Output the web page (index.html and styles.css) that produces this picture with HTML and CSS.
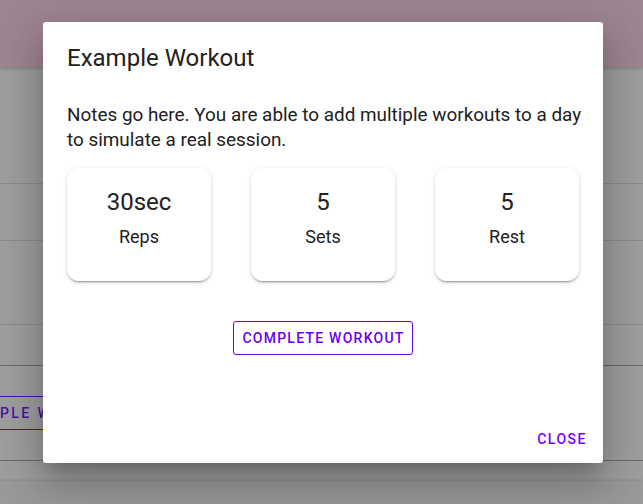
FILE: index.html
```html
<!DOCTYPE html>
<html>
<head>
<meta charset="utf-8">
<link rel="stylesheet" href="styles.css">
</head>
<body>
<div class="page">
  <header class="appbar"></header>
  <div class="row row-a"></div>
  <div class="row row-b"></div>
  <div class="row row-c"></div>
  <div class="row row-d"></div>
  <div class="row row-e">
    <div class="bg-btn">PLE WORKOUT</div>
  </div>
  <div class="gap"></div>
  <div class="band"></div>
</div>

<div class="dialog">
  <h2 class="title">Example Workout</h2>
  <p class="notes">Notes go here. You are able to add multiple workouts to a day to simulate a real session.</p>
  <div class="stats">
    <div class="stat"><div class="value">30sec</div><div class="label">Reps</div></div>
    <div class="stat"><div class="value">5</div><div class="label">Sets</div></div>
    <div class="stat"><div class="value">5</div><div class="label">Rest</div></div>
  </div>
  <div class="complete-wrap">
    <button class="complete">COMPLETE WORKOUT</button>
  </div>
  <div class="actions">
    <button class="close">CLOSE</button>
  </div>
</div>
</body>
</html>
```
FILE: styles.css
```css
* { box-sizing: border-box; }
html, body { margin: 0; padding: 0; }
body {
  width: 643px;
  height: 504px;
  overflow: hidden;
  background: #9e9e9e;
  font-family: Roboto, "Noto Sans", sans-serif;
  position: relative;
}
.page { display: flex; flex-direction: column; height: 504px; }
.appbar {
  height: 67px;
  background: #9e8592;
  box-shadow: 0 2px 3px rgba(0,0,0,0.15);
  position: relative;
  z-index: 1;
}
.row { flex: none; }
.row-a { height: 117px; border-bottom: 1px solid #8c8c8c; }
.row-b { height: 57px; border-bottom: 1px solid #8c8c8c; }
.row-c { height: 84px; border-bottom: 1px solid #8c8c8c; }
.row-d { height: 41px; border-bottom: 1px solid #6a6a6a; }
.row-e {
  height: 95px;
  border-bottom: 1px solid #6a6a6a;
  padding-top: 30px;
}
.bg-btn {
  width: 200px;
  height: 34px;
  border-top: 1px solid #4a12b0;
  border-bottom: 1px solid #4a12b0;
  color: #4a12a0;
  font-size: 14px;
  font-weight: 500;
  letter-spacing: 2.4px;
  line-height: 32px;
  white-space: nowrap;
}
.gap { height: 20px; }
.band {
  flex: 1;
  background: #999999;
  box-shadow: 0 -1px 2px rgba(0,0,0,0.12);
}

.dialog {
  position: absolute;
  z-index: 5;
  left: 43px;
  top: 22px;
  width: 560px;
  height: 441px;
  background: #fff;
  border-radius: 3px;
  box-shadow: 0 11px 15px -7px rgba(0,0,0,.2), 0 24px 38px 3px rgba(0,0,0,.14), 0 9px 46px 8px rgba(0,0,0,.12);
  display: flex;
  flex-direction: column;
  padding: 20px 24px 0;
  color: #212121;
}
.title {
  margin: 0;
  font-size: 24px;
  font-weight: 400;
  line-height: 32px;
}
.notes {
  margin: 28px -12px 0 0;
  font-size: 18.9px;
  line-height: 25px;
}
.stats {
  margin-top: 16px;
  display: grid;
  grid-template-columns: repeat(3, 144px);
  column-gap: 40px;
}
.stat {
  height: 113px;
  border-radius: 12px;
  background: #fff;
  box-shadow: 0 3px 1px -2px rgba(0,0,0,.2), 0 2px 2px 0 rgba(0,0,0,.14), 0 1px 5px 0 rgba(0,0,0,.12);
  padding-top: 16px;
  text-align: center;
}
.value { font-size: 24px; line-height: 36px; }
.label { font-size: 18px; line-height: 27px; margin-top: 3px; }
.complete-wrap {
  margin-top: 40px;
  display: flex;
  justify-content: center;
}
.complete {
  height: 34px;
  padding: 0 7px 0 8px;
  background: #fff;
  border: 1px solid #6a00f4;
  border-radius: 3px;
  color: #6a00f4;
  font-family: Roboto, sans-serif;
  font-size: 14px;
  font-weight: 500;
  letter-spacing: 1.25px;
}
.actions {
  margin-top: auto;
  display: flex;
  justify-content: flex-end;
  padding: 0 0 6px;
  margin-right: -16px;
}
.close {
  background: none;
  border: none;
  height: 36px;
  padding: 0 8px;
  color: #7c00ff;
  font-family: Roboto, sans-serif;
  font-size: 14px;
  font-weight: 500;
  letter-spacing: 1.5px;
}
```
